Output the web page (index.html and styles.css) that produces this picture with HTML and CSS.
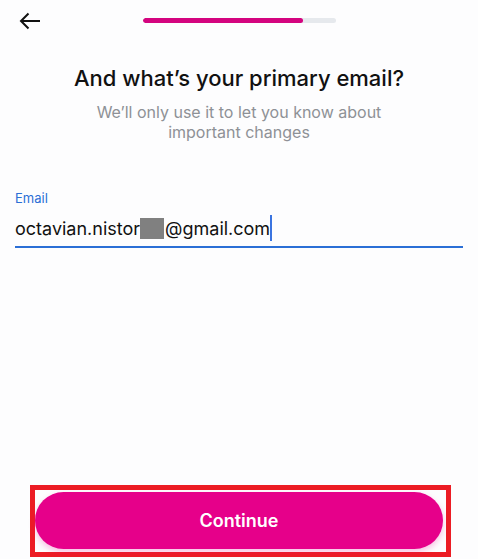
FILE: index.html
```html
<!DOCTYPE html>
<html>
<head>
<meta charset="utf-8">
<link rel="stylesheet" href="styles.css">
</head>
<body>
<div class="screen">
  <header class="top">
    <button class="back" aria-label="Back">
      <svg width="22" height="18" viewBox="0 0 22 18"><path d="M21 9H2M9.5 1.5L2 9l7.5 7.5" fill="none" stroke="#111" stroke-width="2"/></svg>
    </button>
    <div class="progress"><div class="progress-fill"></div></div>
  </header>
  <h1 class="title">And what’s your primary email?</h1>
  <p class="subtitle">We’ll only use it to let you know about<br>important changes</p>
  <div class="field">
    <label class="label">Email</label>
    <div class="input"><span>octavian.nistor</span><span class="redact"></span><span>@gmail.com</span><span class="caret"></span></div>
  </div>
  <div class="spacer"></div>
  <div class="cta-frame">
    <button class="cta">Continue</button>
  </div>
</div>
</body>
</html>
```
FILE: styles.css
```css
* { box-sizing: border-box; }
html, body { margin: 0; padding: 0; }
body {
  background: #fdfdfe;
  font-family: Inter, "Noto Sans", sans-serif;
  color: #111;
}
.screen {
  height: 559px;
  display: flex;
  flex-direction: column;
}
.top {
  position: relative;
  height: 40px;
  display: flex;
  align-items: center;
  justify-content: center;
}
.back {
  position: absolute;
  left: 19px;
  top: 12px;
  padding: 0;
  border: 0;
  background: none;
  width: 22px;
  height: 18px;
}
.back svg { display: block; }
.progress {
  width: 193px;
  height: 5px;
  border-radius: 3px;
  background: #e6e9ed;
  overflow: hidden;
}
.progress-fill {
  width: 160px;
  height: 100%;
  background: #d4047f;
  border-radius: 3px;
}
.title {
  margin: 24px 0 0;
  text-align: center;
  font-size: 22px;
  font-weight: 500;
  line-height: 28px;
  letter-spacing: 0;
}
.subtitle {
  margin: 10px 0 0;
  text-align: center;
  font-size: 16px;
  line-height: 20px;
  color: #8e9196;
}
.field {
  margin: 48px 15px 0 15px;
  border-bottom: 2px solid #2b6fd6;
}
.label {
  display: block;
  font-size: 13px;
  color: #2b6fd6;
  line-height: 16px;
}
.input {
  display: flex;
  align-items: center;
  height: 40px;
  padding-top: 4px;
  font-size: 18px;
  color: #111;
}
.redact {
  display: inline-block;
  width: 24px;
  height: 21px;
  background: #808080;
  margin: 0 1px 0 0;
}
.caret {
  display: inline-block;
  width: 2px;
  height: 26px;
  background: #3a74e0;
  margin-left: 0;
}
.spacer { flex: 1; }
.cta-frame {
  margin: 0 27px 2px 30px;
  border: 5px solid #ec1c24;
  padding: 2px 3px 3px 0;
}
.cta {
  display: block;
  width: 100%;
  height: 57px;
  border: 0;
  border-radius: 29px;
  background: #e6008a;
  color: #fff;
  font-family: Inter, "Noto Sans", sans-serif;
  font-size: 18px;
  font-weight: 600;
  box-shadow: 0 3px 6px rgba(230, 0, 138, 0.25);
}
```
